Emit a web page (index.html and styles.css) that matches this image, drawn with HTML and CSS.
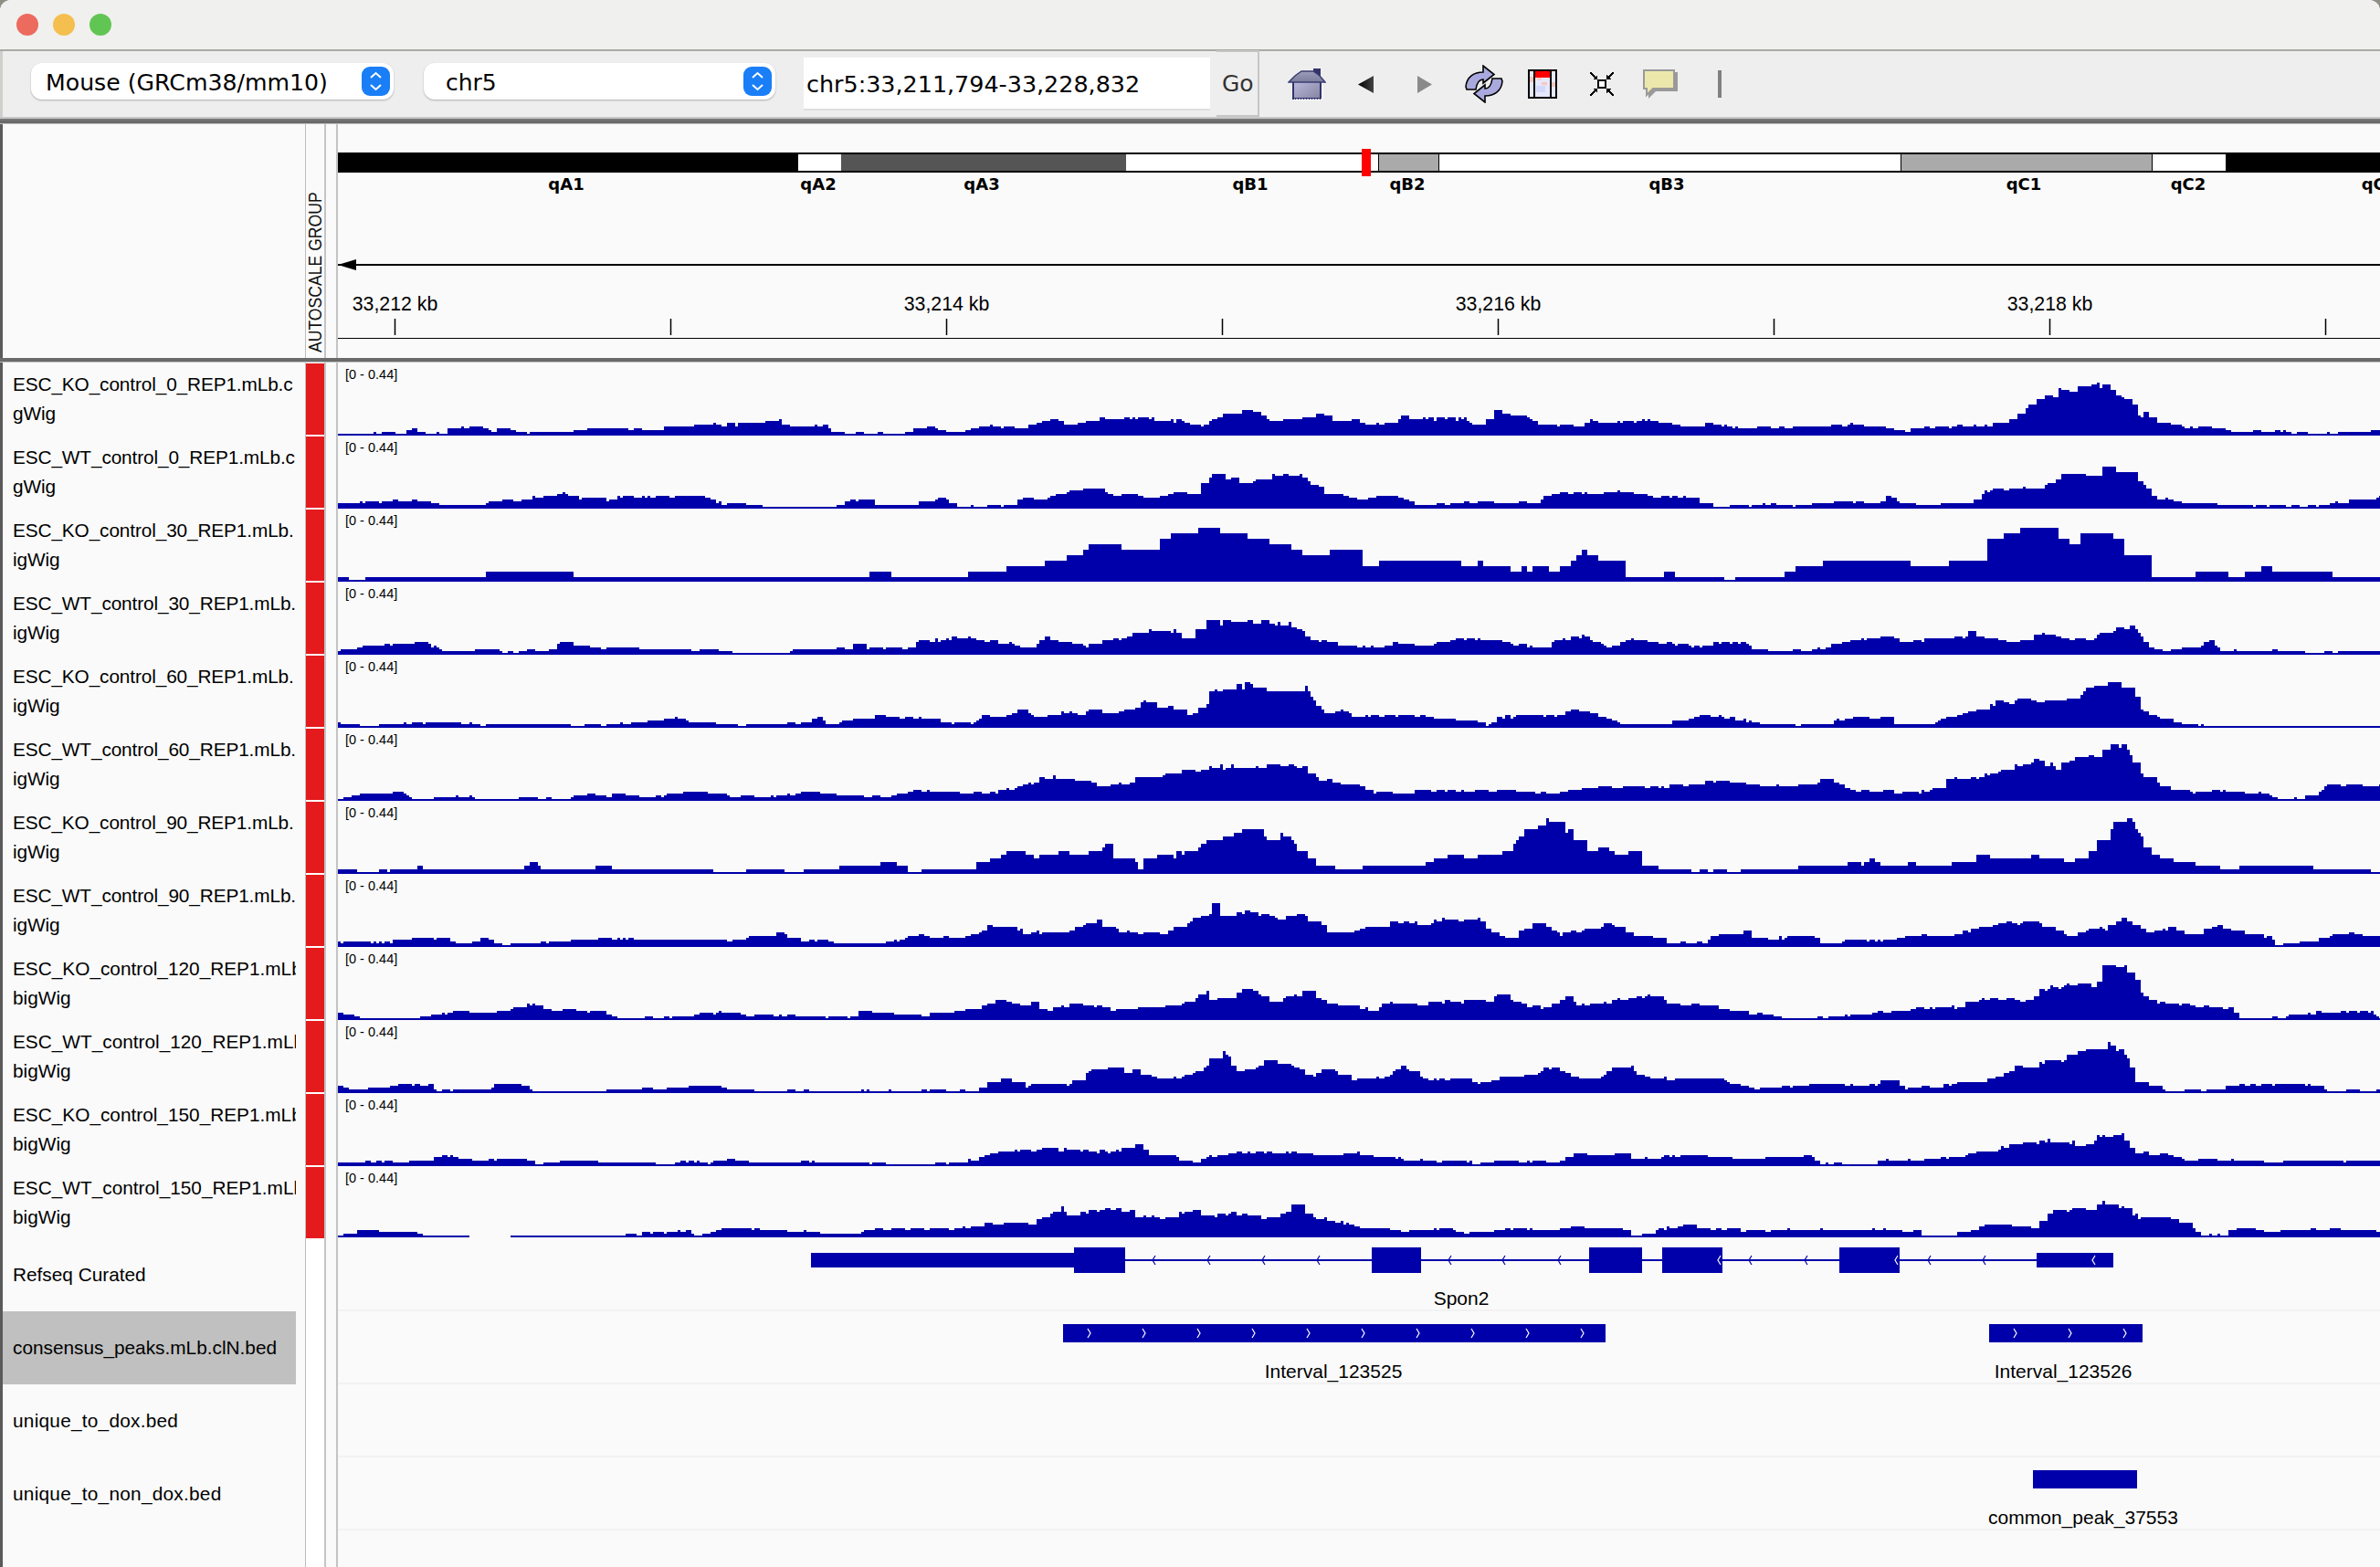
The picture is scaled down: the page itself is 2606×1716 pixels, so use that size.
FILE: index.html
```html
<!DOCTYPE html>
<html lang="en">
<head>
  <meta charset="UTF-8" />
  <title>IGV</title>
  <link rel="stylesheet" href="styles.css">
</head>
<body>
  <div class="window">
    <div class="titlebar">
      <span class="light red"></span>
      <span class="light yellow"></span>
      <span class="light green"></span>
    </div>

    <div class="toolbar">
      <div class="select genome">
        <span>Mouse (GRCm38/mm10)</span>
        <svg class="stepper" viewBox="0 0 31 32"><rect width="31" height="32" rx="9" fill="#1a7ef6"/><path d="M10 12l5.500-5 5.500 5M10 20l5.500 5 5.500-5" fill="none" stroke="#fff" stroke-width="2"/></svg>
      </div>
      <div class="select chrom">
        <span>chr5</span>
        <svg class="stepper" viewBox="0 0 31 32"><rect width="31" height="32" rx="9" fill="#1a7ef6"/><path d="M10 12l5.500-5 5.500 5M10 20l5.500 5 5.500-5" fill="none" stroke="#fff" stroke-width="2"/></svg>
      </div>
      <div class="locus">chr5:33,211,794-33,228,832</div>
      <div class="go">Go</div>
      <div class="tools">
        <div class="tool">
          <svg width="42" height="35" viewBox="0 0 42 35">
            <defs>
              <linearGradient id="roof" x1="0" y1="0" x2="0" y2="1"><stop offset="0" stop-color="#9c9cbc"/><stop offset="1" stop-color="#7c7c9c"/></linearGradient>
              <linearGradient id="wall" x1="0" y1="0" x2="1" y2="1"><stop offset="0" stop-color="#bdbce0"/><stop offset="1" stop-color="#85839f"/></linearGradient>
            </defs>
            <path d="M28 0h8v9h-8z" fill="#34346c"/>
            <path d="M6 13h30v20H6z" fill="url(#wall)" stroke="#33336b" stroke-width="2"/>
            <path d="M1 15L8 8 15 3h13l7 5 6 7z" fill="url(#roof)" stroke="#3d3d72" stroke-width="1.500"/>
            <path d="M38 16v18H7" fill="none" stroke="#fff" stroke-width="1.500" stroke-dasharray="2 1"/>
          </svg>
        </div>
        <div class="tool">
          <svg width="17" height="19" viewBox="0 0 17 19"><defs><linearGradient id="back"><stop offset="0" stop-color="#000"/><stop offset="1" stop-color="#444"/></linearGradient></defs><path d="M17 0v19L0 9.500z" fill="url(#back)"/></svg>
        </div>
        <div class="tool">
          <svg width="16" height="19" viewBox="0 0 16 19"><path d="M0 0v19l16-9.500z" fill="#8a8a8a"/></svg>
        </div>
        <div class="tool">
          <svg width="42" height="42" viewBox="0 0 42 42">
            <path d="M1 24C2 13 10 8 20 8V1l12 9.500L20 20v-4c-4 0-7 4-8 11H2z" fill="#a9a9de" stroke="#000" stroke-width="1.600"/>
            <path d="M1 24C2 13 10 8 20 8V1l12 9.500L20 20v-4c-4 0-7 4-8 11H2z" transform="rotate(180 21 21)" fill="#a9a9de" stroke="#000" stroke-width="1.600"/>
          </svg>
        </div>
        <div class="tool">
          <svg width="32" height="32" viewBox="0 0 32 32" shape-rendering="crispEdges">
            <rect width="32" height="32" fill="#000"/>
            <rect x="2" y="2" width="28" height="28" fill="#e6e8fb"/>
            <rect x="10" y="8" width="5" height="4" fill="#f7d2cc"/>
            <rect x="15" y="14" width="6" height="3" fill="#f6c9c0"/>
            <rect x="9" y="18" width="10" height="7" fill="#d3d8fb"/>
            <rect x="2" y="8" width="4" height="6" fill="#f4c6c0"/>
            <rect x="26" y="14" width="4" height="5" fill="#f4c6c0"/>
            <rect x="6" y="0" width="2" height="32" fill="#000"/>
            <rect x="24" y="0" width="2" height="32" fill="#000"/>
            <rect x="8" y="2" width="16" height="7" fill="#f00"/>
          </svg>
        </div>
        <div class="tool">
          <svg width="26" height="26" viewBox="0 0 26 26" shape-rendering="crispEdges">
            <rect x="9" y="9" width="8" height="8" fill="#fff" stroke="#000" stroke-width="2"/>
            <path d="M0 0l7 7M26 0l-7 7M0 26l7-7M26 26l-7-7" stroke="#000" stroke-width="1.500" fill="none"/>
            <path d="M8 3v5H3zM18 3v5h5zM8 23v-5H3zM18 23v-5h5z" fill="#000"/>
          </svg>
        </div>
        <div class="tool">
          <svg width="38" height="32" viewBox="0 0 38 32">
            <path d="M3 3h35v21H14l-8 8v-8H3z" fill="#999"/>
            <path d="M1 1h33v20H11l-7 7v-7H1z" fill="#ece8ab" stroke="#9a9a9a" stroke-width="2"/>
          </svg>
        </div>
        <div class="tool">
          <div class="tool-sep"></div>
        </div>
      </div>
    </div>
    <div class="toolbar-rule"></div>

    <div class="header-panel">
      <div class="name-col"></div>
      <div class="attr-col"><span class="autoscale">AUTOSCALE GROUP</span></div>
      <div class="gap-col"></div>
      <svg class="header-svg" width="2236" height="256" viewBox="0 0 2236 256">
        <!-- ideogram -->
        <rect x="0" y="31" width="2236" height="22" fill="#000"/>
        <rect x="504" y="33" width="47" height="18" fill="#fff"/>
        <rect x="551" y="33" width="312" height="18" fill="#555"/>
        <rect x="863" y="33" width="277" height="18" fill="#fff"/>
        <rect x="1140" y="33" width="65" height="18" fill="#aaa"/>
        <rect x="1205" y="33" width="506" height="18" fill="#fff"/>
        <rect x="1711" y="33" width="275" height="18" fill="#aaa"/>
        <rect x="1986" y="33" width="81" height="18" fill="#fff"/>
        <rect x="1139" y="33" width="1" height="18" fill="#000"/>
        <rect x="1205" y="33" width="1" height="18" fill="#000"/>
        <rect x="1711" y="33" width="1" height="18" fill="#000"/>
        <rect x="1986" y="33" width="1" height="18" fill="#000"/>
        <rect x="1121" y="27" width="10" height="30" fill="#f00"/>
        <g class="cyto">
          <text x="250" y="72">qA1</text>
          <text x="526" y="72">qA2</text>
          <text x="705" y="72">qA3</text>
          <text x="999" y="72">qB1</text>
          <text x="1171" y="72">qB2</text>
          <text x="1455" y="72">qB3</text>
          <text x="1846" y="72">qC1</text>
          <text x="2026" y="72">qC2</text>
          <text x="2235" y="72">qC3</text>
        </g>
        <!-- strand arrow -->
        <rect x="0" y="153" width="2236" height="2" fill="#000"/>
        <path d="M0 154l20-6v12z" fill="#000"/>
        <!-- ruler -->
        <g class="ruler">
          <text x="62.500" y="204">33,212 kb</text>
          <text x="666.500" y="204">33,214 kb</text>
          <text x="1270.500" y="204">33,216 kb</text>
          <text x="1874.500" y="204">33,218 kb</text>
        </g>
        <path d="M62.500 213v18M364.500 213v18M666.500 213v18M968.500 213v18M1270.500 213v18M1572.500 213v18M1874.500 213v18M2176.500 213v18" stroke="#000" stroke-width="1.500" fill="none"/>
        <rect x="0" y="234" width="2236" height="1" fill="#000"/>
      </svg>
    </div>
    <div class="panel-rule"></div>

    <div class="tracks">
      <div class="row"><div class="name-col"><div class="name wig"><span>ESC_KO_control_0_REP1.mLb.c</span><span>gWig</span></div></div><div class="attr-col"><i></i></div><div class="gap-col"></div><div class="plot"><em>[0 - 0.44]</em><svg class="cov" data-track="0" width="2236" height="80"></svg></div></div>
      <div class="row"><div class="name-col"><div class="name wig"><span>ESC_WT_control_0_REP1.mLb.c</span><span>gWig</span></div></div><div class="attr-col"><i></i></div><div class="gap-col"></div><div class="plot"><em>[0 - 0.44]</em><svg class="cov" data-track="1" width="2236" height="80"></svg></div></div>
      <div class="row"><div class="name-col"><div class="name wig"><span>ESC_KO_control_30_REP1.mLb.</span><span>igWig</span></div></div><div class="attr-col"><i></i></div><div class="gap-col"></div><div class="plot"><em>[0 - 0.44]</em><svg class="cov" data-track="2" width="2236" height="80"></svg></div></div>
      <div class="row"><div class="name-col"><div class="name wig"><span>ESC_WT_control_30_REP1.mLb.</span><span>igWig</span></div></div><div class="attr-col"><i></i></div><div class="gap-col"></div><div class="plot"><em>[0 - 0.44]</em><svg class="cov" data-track="3" width="2236" height="80"></svg></div></div>
      <div class="row"><div class="name-col"><div class="name wig"><span>ESC_KO_control_60_REP1.mLb.</span><span>igWig</span></div></div><div class="attr-col"><i></i></div><div class="gap-col"></div><div class="plot"><em>[0 - 0.44]</em><svg class="cov" data-track="4" width="2236" height="80"></svg></div></div>
      <div class="row"><div class="name-col"><div class="name wig"><span>ESC_WT_control_60_REP1.mLb.</span><span>igWig</span></div></div><div class="attr-col"><i></i></div><div class="gap-col"></div><div class="plot"><em>[0 - 0.44]</em><svg class="cov" data-track="5" width="2236" height="80"></svg></div></div>
      <div class="row"><div class="name-col"><div class="name wig"><span>ESC_KO_control_90_REP1.mLb.</span><span>igWig</span></div></div><div class="attr-col"><i></i></div><div class="gap-col"></div><div class="plot"><em>[0 - 0.44]</em><svg class="cov" data-track="6" width="2236" height="80"></svg></div></div>
      <div class="row"><div class="name-col"><div class="name wig"><span>ESC_WT_control_90_REP1.mLb.</span><span>igWig</span></div></div><div class="attr-col"><i></i></div><div class="gap-col"></div><div class="plot"><em>[0 - 0.44]</em><svg class="cov" data-track="7" width="2236" height="80"></svg></div></div>
      <div class="row"><div class="name-col"><div class="name"><span>ESC_KO_control_120_REP1.mLb.</span><span>bigWig</span></div></div><div class="attr-col"><i></i></div><div class="gap-col"></div><div class="plot"><em>[0 - 0.44]</em><svg class="cov" data-track="8" width="2236" height="80"></svg></div></div>
      <div class="row"><div class="name-col"><div class="name"><span>ESC_WT_control_120_REP1.mLb.</span><span>bigWig</span></div></div><div class="attr-col"><i></i></div><div class="gap-col"></div><div class="plot"><em>[0 - 0.44]</em><svg class="cov" data-track="9" width="2236" height="80"></svg></div></div>
      <div class="row"><div class="name-col"><div class="name"><span>ESC_KO_control_150_REP1.mLb.</span><span>bigWig</span></div></div><div class="attr-col"><i></i></div><div class="gap-col"></div><div class="plot"><em>[0 - 0.44]</em><svg class="cov" data-track="10" width="2236" height="80"></svg></div></div>
      <div class="row last-cov"><div class="name-col"><div class="name"><span>ESC_WT_control_150_REP1.mLb.</span><span>bigWig</span></div></div><div class="attr-col"><i></i></div><div class="gap-col"></div><div class="plot"><em>[0 - 0.44]</em><svg class="cov" data-track="11" width="2236" height="79"></svg></div></div>

      <div class="row"><div class="name-col"><div class="name"><span>Refseq Curated</span></div></div><div class="attr-col"></div><div class="gap-col"></div>
        <div class="plot lined">
          <svg width="2236" height="80" viewBox="0 0 2236 80">
            <rect x="862" y="23" width="998" height="2" fill="#0000aa"/>
            <rect x="518" y="16" width="288" height="16" fill="#0000aa"/>
            <rect x="806" y="10" width="56" height="28" fill="#0000aa"/>
            <rect x="1132" y="10" width="54" height="28" fill="#0000aa"/>
            <rect x="1370" y="10" width="58" height="28" fill="#0000aa"/>
            <rect x="1450" y="10" width="66" height="28" fill="#0000aa"/>
            <rect x="1644" y="10" width="66" height="28" fill="#0000aa"/>
            <rect x="1860" y="16" width="84" height="16" fill="#0000aa"/>
            <path d="M895 19l-3 5 3 5M955 19l-3 5 3 5M1015 19l-3 5 3 5M1075 19l-3 5 3 5M1219 19l-3 5 3 5M1278 19l-3 5 3 5M1339 19l-3 5 3 5M1548 19l-3 5 3 5M1609 19l-3 5 3 5M1744 19l-3 5 3 5M1804 19l-3 5 3 5" fill="none" stroke="#0000aa" stroke-width="1.200"/>
            <path d="M1514 19l-3 5 3 5M1708 19l-3 5 3 5M1924 19l-3 5 3 5" fill="none" stroke="#fff" stroke-width="1.200"/>
            <text class="feature" x="1230" y="73">Spon2</text>
          </svg>
        </div>
      </div>
      <div class="row"><div class="name-col"><div class="name selected"><span>consensus_peaks.mLb.clN.bed</span></div></div><div class="attr-col"></div><div class="gap-col"></div>
        <div class="plot lined">
          <svg width="2236" height="80" viewBox="0 0 2236 80">
            <rect x="794" y="14" width="594" height="20" fill="#0000aa"/>
            <rect x="1808" y="14" width="168" height="20" fill="#0000aa"/>
            <path d="M821 19l3 5-3 5M881 19l3 5-3 5M941 19l3 5-3 5M1001 19l3 5-3 5M1061 19l3 5-3 5M1121 19l3 5-3 5M1181 19l3 5-3 5M1241 19l3 5-3 5M1301 19l3 5-3 5M1361 19l3 5-3 5M1835 19l3 5-3 5M1895 19l3 5-3 5M1955 19l3 5-3 5" fill="none" stroke="#fff" stroke-width="1.200"/>
            <text class="feature" x="1090" y="73">Interval_123525</text>
            <text class="feature" x="1889" y="73">Interval_123526</text>
          </svg>
        </div>
      </div>
      <div class="row"><div class="name-col"><div class="name spaced"><span>unique_to_dox.bed</span></div></div><div class="attr-col"></div><div class="gap-col"></div>
        <div class="plot lined"></div>
      </div>
      <div class="row"><div class="name-col"><div class="name spaced"><span>unique_to_non_dox.bed</span></div></div><div class="attr-col"></div><div class="gap-col"></div>
        <div class="plot lined">
          <svg width="2236" height="80" viewBox="0 0 2236 80">
            <rect x="1856" y="14" width="114" height="20" fill="#0000aa"/>
            <text class="feature" x="1911" y="73">common_peak_37553</text>
          </svg>
        </div>
      </div>
      <div class="row tail"><div class="name-col"></div><div class="attr-col"></div><div class="gap-col"></div><div class="plot"></div></div>
    </div>
  </div>
  <script src="script.js"></script>
</body>
</html>
```

FILE: styles.css
```css
html, body {
  margin: 0;
  background: #8f8f85;
}
.window {
  width: 2606px;
  height: 1716px;
  overflow: hidden;
  border-radius: 12px 12px 0 0;
  background: #fafafa;
  font-family: "Liberation Sans", Arial, sans-serif;
  color: #000;
}

/* title bar */
.titlebar {
  height: 54px;
  background: #f0f0ee;
  border-bottom: 2px solid #a9a9a6;
  display: flex;
  align-items: center;
  gap: 16px;
  padding-left: 18px;
}
.light {
  width: 24px;
  height: 24px;
  border-radius: 50%;
}
.red { background: #ec6a5e; }
.yellow { background: #f4bf4f; }
.green { background: #61c554; }

/* toolbar */
.toolbar {
  height: 72px;
  background: #eeeeee;
  border-left: 3px solid #cfcfcb;
  display: flex;
  align-items: center;
  font-family: "DejaVu Sans", sans-serif;
  font-size: 25px;
}
.select {
  height: 40px;
  margin-top: -6px;
  background: #fff;
  border-radius: 12px;
  box-shadow: 0 1px 2px rgba(0, 0, 0, 0.28);
  display: flex;
  align-items: center;
  justify-content: space-between;
  padding-right: 4px;
  box-sizing: border-box;
}
.select span { padding-top: 2px; }
.genome {
  width: 397px;
  margin-left: 31px;
  padding-left: 16px;
}
.genome span { font-size: 25.200px; }
.chrom {
  width: 385px;
  margin-left: 33px;
  padding-left: 24px;
}
.stepper {
  width: 31px;
  height: 32px;
}
.locus {
  width: 445px;
  height: 58px;
  margin-left: 31px;
  padding-left: 3px;
  box-sizing: border-box;
  background: #fff;
  border-bottom: 2px solid #dedede;
  font-size: 25.400px;
  line-height: 58px;
  white-space: nowrap;
}
.go {
  width: 47px;
  height: 73px;
  margin-left: 7px;
  margin-top: -1px;
  padding-left: 6px;
  box-sizing: border-box;
  border-right: 2px solid #c6c6c6;
  border-top: 2px solid #c6c6c6;
  border-bottom: 2px solid #c6c6c6;
  line-height: 69px;
  color: #333;
}
.tools {
  display: flex;
  margin-left: 20px;
}
.tool {
  width: 64.5px;
  display: flex;
  align-items: center;
  justify-content: center;
}
.tool svg { display: block; }
.tool-sep {
  width: 4px;
  height: 30px;
  background: #808080;
}
.toolbar-rule {
  height: 8px;
  background: linear-gradient(#c8c8c8 0 2px, #777 2px 4px, #6a6a6a 4px 7px, #c0c0c0 7px);
}

/* shared columns */
.name-col {
  width: 335px;
  flex: none;
  box-sizing: border-box;
  border-left: 3px solid #5a5a5a;
  border-right: 1px solid #bdbdbd;
  background: #fafafa;
}
.attr-col {
  width: 22px;
  flex: none;
  box-sizing: border-box;
  border-right: 2px solid #c4c4c4;
  background: #fafafa;
}
.gap-col {
  width: 13px;
  flex: none;
  box-sizing: border-box;
  border-right: 2px solid #c4c4c4;
  background: #fafafa;
}

/* header */
.header-panel {
  height: 256px;
  display: flex;
}
.attr-col .autoscale {
  display: block;
  height: 100%;
  box-sizing: border-box;
  padding-top: 6px;
  writing-mode: vertical-rl;
  transform: rotate(180deg) scaleX(1.15);
  text-align: left;
  font-size: 17.600px;
  line-height: 20px;
  white-space: nowrap;
  color: #111;
}
.header-svg { display: block; flex: none; }
.cyto text {
  font-family: "DejaVu Sans", sans-serif;
  font-weight: bold;
  font-size: 18px;
  text-anchor: middle;
}
.ruler text {
  font-size: 21.300px;
  text-anchor: middle;
}
.panel-rule {
  height: 5px;
  background: linear-gradient(#6a6a6a 0 4px, #c0c0c0 4px);
}

/* tracks */
.row {
  height: 80px;
  display: flex;
}
.row.last-cov { height: 79px; }
.row.tail { height: 40px; }
.name {
  width: 321px;
  height: 100%;
  box-sizing: border-box;
  padding-left: 11px;
  display: flex;
  flex-direction: column;
  justify-content: center;
  font-size: 20.800px;
  line-height: 32px;
}
.name span {
  display: block;
  white-space: nowrap;
  overflow: hidden;
}
.name.wig span { letter-spacing: -0.12px; }
.name.spaced span { letter-spacing: 0.25px; }
.name.selected { background: #c0c0c0; }
.row .attr-col { background: #fff; }
.attr-col i {
  display: block;
  height: 78px;
  margin-top: 1px;
  background: #e41a1c;
}
.plot {
  position: relative;
  width: 2236px;
  flex: none;
}
.plot svg { display: block; }
.plot em {
  position: absolute;
  left: 8px;
  top: 5px;
  font-style: normal;
  font-size: 14.500px;
  line-height: 16px;
}
.plot.lined {
  height: 78px;
  border-bottom: 2px solid #f2f2f2;
}
.plot.lined svg { overflow: visible; }
.cov path { fill: #0000aa; }
.feature {
  font-size: 21px;
  text-anchor: middle;
}
```

FILE: script.js
```js
// coverage envelopes: x,height pairs read off the tracks, left half then right half
const SCALE = 1.4025;
const TRACKS = [
  { l: [0,3,100,3,115,9,135,3,165,3,170,8,205,10,240,6,260,9,280,3,360,5,380,8,450,8,480,5,520,10,545,12,610,12,680,16,690,11,750,11,775,3,800,3,875,2,890,8,910,10,945,3,1000,10,1060,10,1100,17,1130,12,1150,17,1215,20,1290,16,1330,10,1350,19,1400,28,1430,18,1490,18,1510,25,1530,15,1568,17],
    r: [0,17,10,13,50,13,70,20,165,18,175,11,190,12,215,27,240,20,280,18,285,13,340,10,360,17,385,14,445,17,480,12,510,9,545,13,590,9,680,9,760,12,810,9,840,4,860,9,970,11,1000,18,1030,32,1075,48,1110,50,1140,56,1160,50,1190,35,1200,20,1210,26,1230,14,1280,9,1330,9,1340,4,1400,5,1480,2,1560,5,1568,8] },
  { l: [0,6,60,6,70,9,115,8,130,10,160,5,190,3,230,5,270,9,300,12,330,16,355,15,380,10,420,10,430,14,500,12,560,15,590,6,630,5,640,3,690,1,760,2,785,8,810,12,830,3,880,4,900,8,930,11,955,3,1030,3,1055,12,1085,10,1110,18,1170,22,1190,15,1260,13,1280,18,1320,18,1335,30,1345,38,1380,30,1420,30,1430,36,1480,36,1500,25,1530,15,1568,12],
    r: [0,10,15,10,40,14,75,10,100,3,125,5,190,7,270,7,295,17,360,17,400,22,445,15,525,11,540,3,610,3,630,5,680,3,730,8,800,6,815,14,830,8,880,2,895,6,945,6,960,18,1000,23,1050,23,1080,36,1130,36,1160,44,1180,44,1210,22,1230,12,1260,8,1300,6,1400,3,1470,3,1520,8,1568,12] },
  { q: 6, o: -1, wide: 2,
    l: [0,5,30,2,210,5,245,11,340,11,345,5,415,2,675,5,810,5,815,11,850,11,855,5,970,5,990,14,1035,14,1040,21,1080,14,1110,24,1140,32,1160,41,1200,41,1205,34,1260,34,1280,50,1300,56,1340,60,1400,50,1450,44,1490,32,1510,26,1540,40,1568,32],
    r: [0,30,10,20,35,15,45,20,215,20,220,5,235,14,320,14,345,35,365,25,410,20,415,10,440,4,480,10,500,4,560,2,655,5,660,10,700,20,740,25,855,25,870,14,900,20,960,25,965,40,990,55,1070,55,1090,40,1130,55,1170,50,1195,30,1210,14,1215,5,1275,5,1280,10,1340,10,1345,5,1390,15,1500,10,1505,5,1568,5] },
  { l: [0,5,40,9,100,11,130,14,160,6,180,3,240,6,260,3,330,6,345,15,405,8,480,6,590,6,620,2,690,2,710,6,790,8,805,17,815,7,885,7,890,13,960,20,1000,15,1070,8,1090,20,1120,13,1150,9,1180,15,1240,25,1290,27,1305,17,1340,35,1400,36,1470,33,1500,15,1530,13,1568,9],
    r: [0,9,50,9,55,15,95,8,130,12,170,18,210,15,270,8,290,7,300,15,350,20,385,7,420,17,470,12,530,9,550,12,590,15,610,5,700,5,740,12,780,18,805,20,850,13,880,18,930,18,940,25,970,18,1000,13,1030,18,1060,25,1080,18,1130,18,1140,26,1190,30,1210,13,1230,4,1280,8,1310,15,1330,5,1430,4,1470,2,1568,5] },
  { l: [0,5,55,3,100,4,120,6,200,5,210,3,310,4,320,3,400,3,470,6,525,11,550,6,625,3,680,4,720,5,740,11,760,4,780,7,830,13,920,11,935,5,975,5,990,12,1030,13,1050,21,1070,12,1090,10,1110,19,1135,15,1160,20,1190,15,1220,20,1240,29,1280,22,1310,15,1335,24,1340,37,1355,43,1400,47,1420,40,1490,43,1505,25,1520,15,1540,20,1568,14],
    r: [0,12,40,15,100,12,125,10,175,9,200,3,215,11,240,13,310,13,330,21,365,15,400,6,430,3,470,5,520,12,540,14,585,10,610,5,715,3,745,11,815,11,830,3,880,6,920,15,955,20,985,28,1025,31,1100,31,1135,45,1160,52,1195,40,1200,20,1225,13,1255,7,1300,2,1400,2,1568,2] },
  { l: [0,2,35,9,95,9,120,2,190,5,240,2,350,3,390,8,415,4,440,9,470,4,560,10,600,5,660,5,730,10,785,5,850,5,870,10,890,12,1000,8,1050,16,1090,25,1120,25,1135,17,1150,25,1165,17,1215,20,1235,28,1290,30,1340,38,1400,36,1450,38,1485,40,1500,28,1530,20,1568,18],
    r: [0,18,15,11,50,8,110,11,170,12,220,11,270,11,290,8,320,10,380,17,410,14,500,17,540,20,610,18,670,16,700,18,720,27,745,16,760,11,880,10,910,25,945,25,990,35,1030,45,1075,38,1105,50,1130,46,1155,58,1180,58,1200,35,1225,20,1250,14,1280,10,1340,11,1365,7,1390,10,1405,3,1460,3,1490,17,1568,17] },
  { q: 4, o: 1,
    l: [0,5,45,2,110,5,130,9,145,5,280,5,300,11,315,5,320,2,380,5,410,9,445,3,470,5,575,5,580,2,680,5,700,2,760,5,780,9,830,11,865,9,890,2,920,5,975,5,1000,17,1040,25,1075,20,1100,22,1165,23,1185,37,1195,17,1220,17,1235,5,1250,17,1295,22,1330,30,1345,37,1380,47,1420,47,1430,33,1450,47,1480,25,1500,11,1545,5,1568,5],
    r: [0,5,10,9,105,9,130,21,180,19,215,21,240,33,260,45,290,57,310,55,340,38,355,23,375,30,395,21,425,21,430,9,480,5,565,2,665,5,700,9,775,11,785,17,810,11,880,11,925,11,960,21,1010,17,1050,21,1090,11,1110,17,1140,33,1160,55,1180,65,1200,45,1215,25,1240,17,1270,11,1305,9,1330,5,1370,9,1420,9,1530,5,1568,2] },
  { l: [0,5,80,5,110,10,160,9,190,3,230,9,250,3,350,6,420,10,490,8,570,8,600,7,680,14,710,8,750,7,780,3,840,5,890,12,960,11,990,15,1005,25,1050,20,1060,15,1120,18,1170,28,1190,20,1220,16,1240,14,1290,18,1300,27,1330,32,1350,46,1370,33,1400,40,1440,33,1480,34,1515,25,1525,14,1568,18],
    r: [0,23,30,20,60,27,100,24,130,31,185,31,210,15,235,11,260,20,275,27,310,14,340,17,390,25,410,20,420,14,460,10,480,5,535,5,540,11,600,16,620,9,700,12,715,5,780,8,810,6,850,12,910,14,950,20,970,24,1010,26,1030,27,1070,23,1090,11,1130,20,1150,20,1175,31,1210,16,1250,20,1290,13,1310,23,1400,11,1410,3,1470,6,1500,13,1530,15,1568,10] },
  { l: [0,9,25,4,60,2,120,2,140,5,195,9,240,7,265,12,300,18,325,12,410,9,430,3,520,3,590,9,640,5,790,3,810,9,895,5,945,9,980,12,1015,21,1070,18,1090,10,1130,18,1190,12,1240,15,1280,15,1310,18,1335,33,1345,21,1400,33,1450,21,1495,33,1520,18,1568,15],
    r: [0,16,20,10,40,18,100,17,135,20,200,20,220,31,240,20,280,13,300,18,320,26,340,17,380,20,420,25,460,25,480,18,550,15,600,8,640,4,660,2,720,3,800,8,860,12,925,14,960,25,1025,20,1050,32,1085,39,1135,38,1155,60,1180,60,1195,45,1210,22,1230,20,1300,15,1340,12,1360,2,1430,4,1475,9,1555,9,1568,2] },
  { l: [0,9,20,3,115,9,145,9,150,3,230,4,265,11,295,6,300,2,380,2,480,5,575,9,610,5,640,2,960,3,985,2,1015,16,1040,17,1055,3,1065,10,1130,10,1150,21,1185,29,1210,25,1250,21,1260,17,1295,17,1330,27,1360,45,1385,23,1430,33,1470,30,1490,18,1520,27,1550,18,1568,13],
    r: [0,15,30,16,70,28,105,16,170,15,190,10,220,17,250,18,295,27,340,17,375,17,385,27,420,27,440,16,560,16,570,9,600,9,605,5,700,9,800,10,820,15,840,5,900,9,960,13,990,21,1005,27,1060,33,1100,40,1150,53,1180,40,1190,27,1205,9,1230,9,1240,3,1320,3,1340,9,1480,9,1485,2,1568,3] },
  { l: [0,3,60,5,130,5,165,12,210,6,280,8,310,3,370,7,410,3,445,4,500,2,530,6,570,3,600,7,640,4,700,5,810,4,860,2,960,4,1000,12,1010,15,1090,19,1150,17,1190,15,1230,23,1245,15,1280,13,1310,3,1340,10,1400,15,1450,15,1470,14,1515,12,1568,14],
    r: [0,14,30,10,100,6,170,5,180,2,210,6,310,5,340,14,380,11,410,14,425,8,520,12,600,8,690,11,715,3,790,2,800,6,900,8,980,18,1000,23,1075,28,1120,22,1135,32,1175,35,1190,18,1195,15,1240,12,1270,7,1380,6,1400,3,1430,6,1568,6] },
  { base: 78,
    l: [0,1,40,8,100,6,140,2,208,2,211,0,264,0,266,1,350,2,385,1,520,6,535,9,550,2,590,9,650,9,740,5,790,4,820,9,950,9,1005,15,1040,16,1070,15,1110,32,1130,25,1200,32,1240,22,1280,22,1310,29,1350,25,1400,28,1420,17,1475,35,1500,22,1540,18,1568,10],
    r: [0,10,45,10,65,6,100,9,150,9,155,5,250,9,290,6,330,13,350,10,410,9,420,3,450,3,460,9,515,13,540,9,600,8,700,8,780,9,860,6,870,1,920,1,930,8,980,15,1040,9,1060,24,1075,30,1130,30,1145,39,1170,33,1200,22,1230,22,1280,14,1295,3,1330,3,1340,8,1370,10,1405,7,1470,9,1568,8] }
];

function makeRandom(seed) {
  let s = seed;
  return function () {
    s = (s * 16807) % 2147483647;
    return s / 2147483647;
  };
}

function anchors(track) {
  const pts = [];
  for (let i = 0; i < track.l.length; i += 2) pts.push([track.l[i] / SCALE, track.l[i + 1]]);
  for (let i = 0; i < track.r.length; i += 2) pts.push([1118 + track.r[i] / SCALE, track.r[i + 1]]);
  return pts;
}

function heightAt(pts, x) {
  for (let i = 1; i < pts.length; i++) {
    if (x <= pts[i][0]) {
      const a = pts[i - 1], b = pts[i];
      const t = b[0] === a[0] ? 0 : (x - a[0]) / (b[0] - a[0]);
      return a[1] + (b[1] - a[1]) * t;
    }
  }
  return pts[pts.length - 1][1];
}

function coveragePath(track, seed) {
  const rand = makeRandom(seed * 7919 + 11);
  const pts = anchors(track);
  const q = track.q || 2;
  const o = track.o || 0;
  const wide = track.wide || 1;
  const base = track.base || 80;
  let d = "M0 " + base;
  let x = 0;
  while (x < 2236) {
    const r = rand();
    let w = (r < 0.5 ? 3 : r < 0.75 ? 6 : r < 0.9 ? 9 : 15) * wide;
    if (x + w > 2236) w = 2236 - x;
    const raw = heightAt(pts, x + w / 2);
    let h = raw + (rand() - 0.5) * (1.5 + raw * 0.14) * (wide > 1 ? 0.4 : 1);
    h = Math.round((h - o) / q) * q + o;
    if (raw < 0.5) h = 0;
    else if (h < 2) h = 2;
    d += " L" + x + " " + (base - h) + " L" + (x + w) + " " + (base - h);
    x += w;
  }
  return d + " L2236 " + base + " Z";
}

document.querySelectorAll(".cov").forEach(function (svg) {
  const i = Number(svg.dataset.track);
  const path = document.createElementNS("http://www.w3.org/2000/svg", "path");
  path.setAttribute("d", coveragePath(TRACKS[i], i + 1));
  path.setAttribute("shape-rendering", "crispEdges");
  svg.appendChild(path);
});
```
